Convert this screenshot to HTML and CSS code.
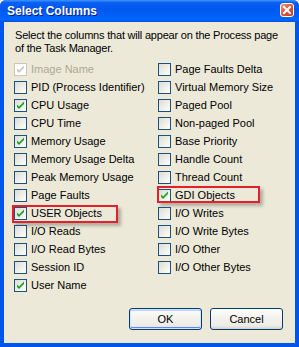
FILE: index.html
```html
<!DOCTYPE html>
<html>
  <head>
    <meta name="viewport" content="width=device-width, initial-scale=1">
    <link rel="stylesheet" href="styles.css">
  </head>

  <body>
    <div class="window">
      <div class="titlebar">
        <span class="title">Select Columns</span>
        <!-- botão fechar -->
        <svg class="close" width="14" height="14" viewBox="0 0 14 14">
          <defs>
            <linearGradient id="cg" x1="0" y1="0" x2="1" y2="1">
              <stop offset="0" stop-color="#f0a08a"/>
              <stop offset="0.45" stop-color="#e2593b"/>
              <stop offset="1" stop-color="#c1371c"/>
            </linearGradient>
          </defs>
          <rect x="0.5" y="0.5" width="13" height="13" rx="2.5" fill="url(#cg)" stroke="#fff"/>
          <path d="M4 4 L10 10 M10 4 L4 10" stroke="#fff" stroke-width="2" stroke-linecap="square"/>
        </svg>
      </div>

      <div class="content">
        <p class="intro">Select the columns that will appear on the Process page<br>of the Task Manager.</p>

        <div class="columns">
          <div class="col">
            <label class="row disabled"><span class="box checked"></span>Image Name</label>
            <label class="row"><span class="box"></span>PID (Process Identifier)</label>
            <label class="row"><span class="box checked"></span>CPU Usage</label>
            <label class="row"><span class="box"></span>CPU Time</label>
            <label class="row"><span class="box checked"></span>Memory Usage</label>
            <label class="row"><span class="box"></span>Memory Usage Delta</label>
            <label class="row"><span class="box"></span>Peak Memory Usage</label>
            <label class="row"><span class="box"></span>Page Faults</label>
            <label class="row"><span class="box checked"></span>USER Objects<span class="mark mark-user"></span></label>
            <label class="row"><span class="box"></span>I/O Reads</label>
            <label class="row"><span class="box"></span>I/O Read Bytes</label>
            <label class="row"><span class="box"></span>Session ID</label>
            <label class="row"><span class="box checked"></span>User Name</label>
          </div>
          <div class="col">
            <label class="row"><span class="box"></span>Page Faults Delta</label>
            <label class="row"><span class="box"></span>Virtual Memory Size</label>
            <label class="row"><span class="box"></span>Paged Pool</label>
            <label class="row"><span class="box"></span>Non-paged Pool</label>
            <label class="row"><span class="box"></span>Base Priority</label>
            <label class="row"><span class="box"></span>Handle Count</label>
            <label class="row"><span class="box"></span>Thread Count</label>
            <label class="row"><span class="box checked"></span>GDI Objects<span class="mark mark-gdi"></span></label>
            <label class="row"><span class="box"></span>I/O Writes</label>
            <label class="row"><span class="box"></span>I/O Write Bytes</label>
            <label class="row"><span class="box"></span>I/O Other</label>
            <label class="row"><span class="box"></span>I/O Other Bytes</label>
          </div>
        </div>

        <div class="actions">
          <button type="button" class="btn default">OK</button>
          <button type="button" class="btn">Cancel</button>
        </div>
      </div>
    </div>
  </body>
</html>
```

FILE: styles.css
```css
html, body {
  margin: 0;
  height: 100%;
  overflow: hidden;
  font-family: "Liberation Sans", Arial, sans-serif;
  font-size: 11px;
  color: #000;
}

.window {
  width: 299px;
  height: 347px;
  box-sizing: border-box;
  display: flex;
  flex-direction: column;
  background: #0055ea;
  border-radius: 6px 6px 0 0;
  overflow: hidden;
}

/* barra de título azul do XP */
.titlebar {
  height: 22px;
  flex: none;
  display: flex;
  align-items: center;
  justify-content: space-between;
  padding: 0 5px 0 7px;
  background: linear-gradient(#3d95ff, #0a5ff0 12%, #0058ee 40%, #0063fb 80%, #0066ff 90%, #0050e0 100%);
}

.title {
  color: #fff;
  font-weight: bold;
  font-size: 12px;
  text-shadow: 1px 1px 0 #0a1a8a;
}

.close {
  display: block;
  margin-top: -2px;
}

.content {
  flex: 1;
  margin: 0 4px 4px;
  background: #ece9d8;
  display: flex;
  flex-direction: column;
  padding: 0 12px 0 10px;
}

.intro {
  margin: 7px 0 0 1px;
  line-height: 13px;
  white-space: nowrap;
  letter-spacing: -0.2px;
}

.columns {
  margin-top: 5px;
  display: grid;
  grid-template-columns: 144px 1fr;
}

.row {
  position: relative;
  height: 18px;
  display: flex;
  align-items: center;
  gap: 4px;
  white-space: nowrap;
}

.disabled {
  color: #aca899;
}

/* caixa de seleção estilo XP */
.box {
  width: 13px;
  height: 13px;
  box-sizing: border-box;
  flex: none;
  border: 1px solid #1c5180;
  background: linear-gradient(135deg, #dcdcd7, #f4f4f0 70%, #fff);
}

.box.checked {
  background-image: url("data:image/svg+xml;utf8,<svg xmlns='http://www.w3.org/2000/svg' width='11' height='11'><path d='M2 4.5 v2.5 l2 2 l5 -5 v-2.5 l-5 5 z' fill='%2321a121'/></svg>"), linear-gradient(135deg, #dcdcd7, #f4f4f0 70%, #fff);
}

.disabled .box {
  border-color: #cac8bb;
  background: #fff;
}

.disabled .box.checked {
  background: url("data:image/svg+xml;utf8,<svg xmlns='http://www.w3.org/2000/svg' width='11' height='11'><path d='M2 4.5 v2.5 l2 2 l5 -5 v-2.5 l-5 5 z' fill='%23cac8bb'/></svg>"), #fff;
}

/* destaque vermelho por cima da linha */
.mark {
  position: absolute;
  box-sizing: border-box;
  border: 2px solid #e4202a;
  box-shadow: 3px 3px 3px rgba(0, 0, 0, 0.25);
}

.mark-user {
  left: -2px;
  top: 1px;
  width: 106px;
  height: 18px;
}

.mark-gdi {
  left: -1px;
  top: 0;
  width: 103px;
  height: 17px;
}

.actions {
  margin-top: 14px;
  display: flex;
  justify-content: flex-end;
  gap: 8px;
}

.btn {
  width: 73px;
  height: 22px;
  padding: 0;
  border: 1px solid #003c74;
  border-radius: 3px;
  background: linear-gradient(#fff, #f4f3ee 40%, #ecebe6 85%, #d6d0c5);
  font-family: "Liberation Sans", Arial, sans-serif;
  font-size: 11px;
  color: #000;
}

.btn.default {
  box-shadow: inset 0 0 0 1px #cee7ff, inset 0 -1px 0 1px #6982ee, inset 0 1px 0 1px #b9d1fc;
}
```
